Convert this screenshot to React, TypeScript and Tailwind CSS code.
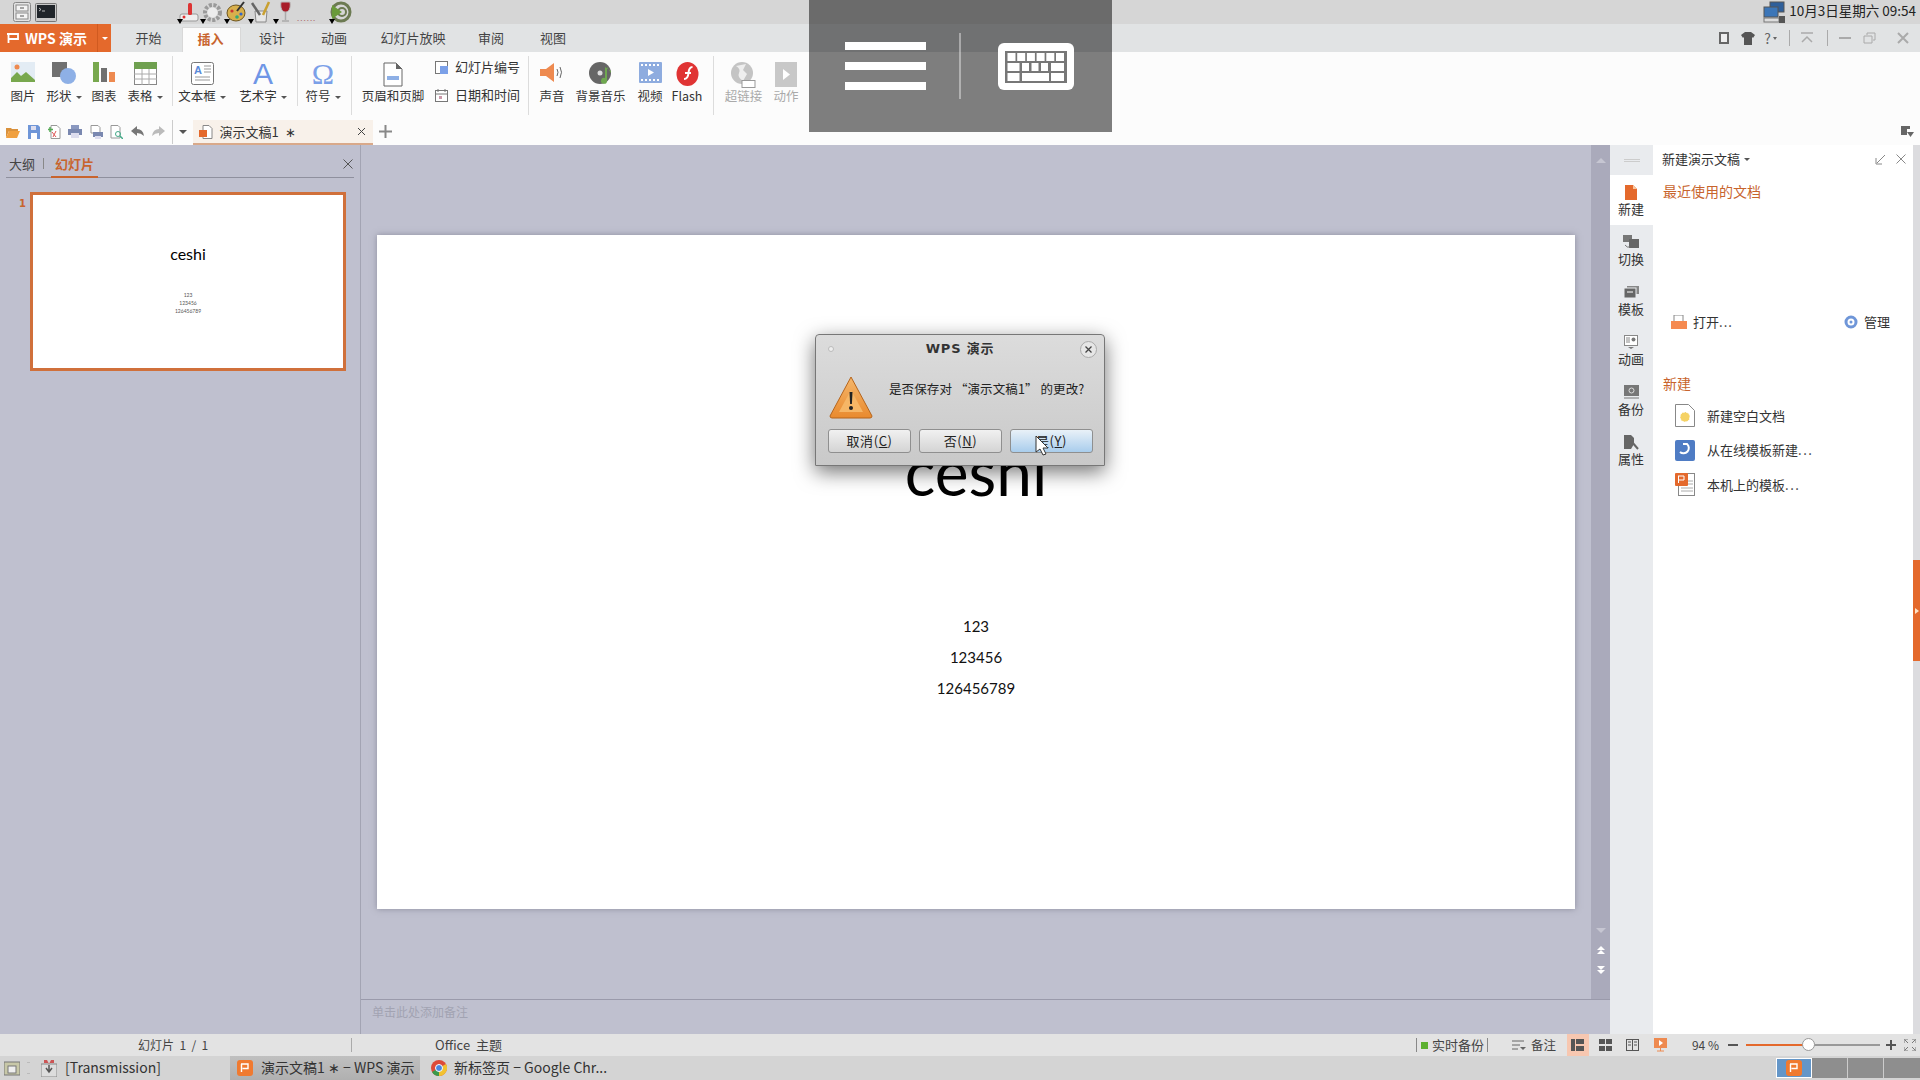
import type { ReactNode } from 'react';

const Drop = () => <span className="inline-block w-0 h-0 ml-[4px] align-middle border-x-[3px] border-x-transparent border-t-[3px] border-t-[#555]" />;

const RibbonBtn = ({ w, label, arrow, muted, children }: { w: number; label: string; arrow?: boolean; muted?: boolean; children: ReactNode }) => (
  <div className="flex flex-col items-center shrink-0" style={{ width: w }}>
    <div className="h-[26px] flex items-start justify-center">{children}</div>
    <div className={`h-[16px] leading-[16px] text-[12.5px] whitespace-nowrap ${muted ? 'text-[#aaa]' : 'text-[#333]'}`}>
      {label}{arrow && <Drop />}
    </div>
  </div>
);

const Sep = ({ h = 50 }: { h?: number }) => <div className="w-px bg-[#dcdcdc] mt-[4px] shrink-0" style={{ height: h }} />;

const Launcher = ({ w, children }: { w: number; children: ReactNode }) => (
  <div className="relative h-[24px] flex items-center justify-center shrink-0" style={{ width: w }}>
    {children}
    <span className="absolute left-[0px] bottom-[0px] w-0 h-0 border-x-[3px] border-x-transparent border-t-[5px] border-t-black" />
  </div>
);

const SideTab = ({ label, active, children }: { label: string; active?: boolean; children: ReactNode }) => (
  <div className={`h-[50px] flex flex-col items-center pt-[9px] pr-[1px] ${active ? 'bg-white' : ''}`}>
    <div className="h-[16px] flex items-center">{children}</div>
    <div className="text-[13px] leading-[18px] text-[#333]">{label}</div>
  </div>
);

const DialogBtn = ({ label, k, primary }: { label: string; k: string; primary?: boolean }) => (
  <div className={`w-[83px] h-[24px] rounded-[3px] border border-[#8f8f8f] flex items-center justify-center text-[13px] text-[#222] ${primary ? 'bg-gradient-to-b from-[#e9f1f8] to-[#a9cdec]' : 'bg-gradient-to-b from-[#f1f1f1] to-[#d4d4d4]'}`}>
    <span className="whitespace-nowrap tracking-[0.6px]">{label}(<span className="underline">{k}</span>)</span>
  </div>
);

const QuickIcon = ({ children }: { children: ReactNode }) => <div className="w-[20.7px] flex justify-center shrink-0">{children}</div>;

const ppt = (
  <svg width="16" height="16" viewBox="0 0 16 16"><rect width="16" height="16" rx="3" fill="#f07a30" /><path d="M4 4h7v4.5H5.5M4.5 4v8" fill="none" stroke="#fff" strokeWidth="1.4" /></svg>
);

export default function App() {
  return (
    <div className="relative w-[1920px] h-[1080px] overflow-hidden flex flex-col bg-[#bfc0cf] font-['Noto_Sans_CJK_SC','Liberation_Sans',sans-serif] text-[#333]">
      {/* top panel */}
      <div className="h-[24px] bg-[#d6d6d6] flex items-center shrink-0">
        <svg className="ml-[13px]" width="18" height="20" viewBox="0 0 18 20">
          <rect x=".5" y=".5" width="17" height="19" rx="2" fill="#e4e4e4" stroke="#888" />
          <rect x="3" y="3" width="12" height="6" fill="#f4f4f4" stroke="#888" />
          <rect x="3" y="11" width="12" height="6" fill="#f4f4f4" stroke="#888" />
          <path d="M7 6h4M7 14h4" stroke="#555" />
        </svg>
        <svg className="ml-[4px]" width="22" height="19" viewBox="0 0 22 19">
          <rect x=".5" y=".5" width="21" height="18" rx="1" fill="#c9c9c9" stroke="#777" />
          <rect x="2" y="2" width="18" height="13" fill="#20252a" />
          <path d="M4 5l2 1.500-2 1.500M7 8h3" fill="none" stroke="#ddd" strokeWidth=".8" />
        </svg>
        <div className="ml-[120px] flex">
          <Launcher w={23}>
            <svg width="20" height="22" viewBox="0 0 20 22"><rect x="1" y="13" width="18" height="7" rx="2" fill="#eee" stroke="#999" /><rect x="9" y="2" width="4" height="12" rx="1.5" fill="#d33" /><circle cx="5" cy="16" r="1.5" fill="#d33" /></svg>
          </Launcher>
          <Launcher w={24}>
            <svg width="21" height="21" viewBox="0 0 21 21"><circle cx="10.5" cy="10.5" r="7.5" fill="none" stroke="#9a9a9a" strokeWidth="4" strokeDasharray="3 1.5" /><circle cx="10.5" cy="10.5" r="5" fill="#ececec" /></svg>
          </Launcher>
          <Launcher w={24}>
            <svg width="21" height="22" viewBox="0 0 21 22"><ellipse cx="10" cy="12" rx="9" ry="8" fill="#d8b04c" stroke="#6d5520" /><circle cx="6" cy="10" r="1.6" fill="#c33" /><circle cx="11" cy="16" r="1.8" fill="#3a7" /><circle cx="15" cy="13" r="1.6" fill="#36c" /><path d="M18 1l-7 9" stroke="#333" strokeWidth="2" /></svg>
          </Launcher>
          <Launcher w={25}>
            <svg width="21" height="22" viewBox="0 0 21 22"><path d="M5 10h12l-1 11H6z" fill="#e6e6e6" stroke="#888" /><path d="M2 2l8 12" stroke="#666" strokeWidth="2.5" /><path d="M19 1l-6 13" stroke="#c9a030" strokeWidth="2.5" /></svg>
          </Launcher>
          <Launcher w={24}>
            <svg width="13" height="22" viewBox="0 0 13 22"><path d="M2 1h9c1 6-1 10-4.500 10S1 7 2 1z" fill="#a81c28" stroke="#bbb" /><path d="M6.500 11v8M3 20h7" stroke="#aaa" strokeWidth="1.500" /></svg>
          </Launcher>
          <div className="w-[32px] h-[24px] flex items-end pb-[2px] text-[#a66] text-[8px] leading-none tracking-[1px]">......</div>
          <Launcher w={24}>
            <svg width="22" height="22" viewBox="0 0 22 22"><circle cx="11" cy="11" r="9" fill="none" stroke="#6c7a52" strokeWidth="3" /><circle cx="12" cy="11" r="4" fill="none" stroke="#6c7a52" strokeWidth="2" /><path d="M2 4l10 7-10 7z" fill="#6a9a3a" /></svg>
          </Launcher>
        </div>
        <div className="ml-auto flex items-center pr-[4px]">
          <svg width="22" height="22" viewBox="0 0 22 22"><rect x="7" y="1" width="14" height="10" fill="#2f5f9a" stroke="#555" /><rect x="1" y="6" width="14" height="10" fill="#3c76b8" stroke="#555" /><rect x="1" y="17" width="15" height="4" fill="#ddd" stroke="#777" /><rect x="16" y="15" width="6" height="7" fill="#555" /></svg>
          <span className="ml-[4px] pb-[2px] text-[13.5px] leading-none whitespace-nowrap text-[#222]">10月3日星期六 09:54</span>
        </div>
      </div>

      {/* menu tabs */}
      <div className="h-[28px] bg-[#e1e3e4] flex shrink-0">
        <div className="w-[111px] bg-[#e4692c] flex items-center text-white shrink-0">
          <svg className="ml-[6px]" width="14" height="14" viewBox="0 0 14 14"><path d="M1 3h11v5H3M2.500 3v9" fill="none" stroke="#fff" strokeWidth="1.800" /></svg>
          <span className="ml-[5px] text-[14px] font-bold whitespace-nowrap">WPS 演示</span>
          <span className="ml-auto w-[14px] h-full border-l border-[#d05a20] flex items-center justify-center">
            <span className="w-0 h-0 border-x-[3px] border-x-transparent border-t-[3px] border-t-white" />
          </span>
        </div>
        {[['开始', 71], ['插入', 59], ['设计', 62], ['动画', 62], ['幻灯片放映', 96], ['审阅', 60], ['视图', 64]].map(([t, w]) => (
          <div
            key={t}
            className={`flex items-center justify-center text-[13px] ${t === '插入' ? 'bg-[#fcfcfc] text-[#c8642d] font-bold border-x border-t border-[#d8d8d8] mt-[3px] pb-[3px] pr-[2px]' : 'text-[#444]'} ${t === '开始' ? 'pl-[4px]' : ''}`}
            style={{ width: Number(w) }}
          >
            {t}
          </div>
        ))}
        <div className="ml-auto flex items-center pr-[11px] text-[#666]">
          <svg width="12" height="14" viewBox="0 0 12 14"><rect x="1" y="1" width="10" height="12" fill="#666" /><rect x="3" y="3" width="6" height="8" fill="#eee" /></svg>
          <svg className="ml-[11px]" width="14" height="13" viewBox="0 0 14 13"><path d="M4 0h6l4 3-2 3-1-1v8H3V5L2 6 0 3z" fill="#555" /></svg>
          <span className="ml-[9px] text-[14px] leading-none text-[#666]">?</span>
          <span className="ml-[2px] w-0 h-0 border-x-[2px] border-x-transparent border-t-[3px] border-t-[#666]" />
          <div className="ml-[12px] w-px h-[16px] bg-[#aaa]" />
          <svg className="ml-[10px]" width="14" height="12" viewBox="0 0 14 12"><path d="M1 1h12M2 10l5-5 5 5" fill="none" stroke="#aaa" strokeWidth="1.500" /></svg>
          <div className="ml-[13px] w-px h-[16px] bg-[#aaa]" />
          <div className="ml-[11px] w-[12px] h-[2px] bg-[#aaa]" />
          <svg className="ml-[12px]" width="13" height="12" viewBox="0 0 13 12"><path d="M4 3V1h8v7h-2M1 4h8v7H1z" fill="none" stroke="#aaa" /></svg>
          <svg className="ml-[21px]" width="12" height="12" viewBox="0 0 12 12"><path d="M1 1l10 10M11 1L1 11" stroke="#aaa" strokeWidth="2" /></svg>
        </div>
      </div>

      {/* ribbon */}
      <div className="h-[66px] bg-[#fcfcfc] flex shrink-0">
        <div className="w-[172px] flex pt-[10px] shrink-0">
          <RibbonBtn w={46} label="图片">
            <svg width="24" height="20" viewBox="0 0 24 20"><rect width="24" height="20" fill="#e3ecf4" /><circle cx="6" cy="5" r="2.500" fill="#ee8a50" /><path d="M0 20V16l6-6 4 4 5-4 9 8v2z" fill="#78a84e" /></svg>
          </RibbonBtn>
          <RibbonBtn w={36} label="形状" arrow>
            <svg width="24" height="22" viewBox="0 0 24 22"><rect width="15" height="15" fill="#707070" /><circle cx="16" cy="14" r="8" fill="#8eb0e6" /></svg>
          </RibbonBtn>
          <RibbonBtn w={44} label="图表">
            <svg width="22" height="20" viewBox="0 0 22 20"><rect x="0" width="6" height="20" fill="#78a84e" /><rect x="8" y="6" width="6" height="14" fill="#707070" /><rect x="16" y="10" width="6" height="10" fill="#ee8a50" /></svg>
          </RibbonBtn>
          <RibbonBtn w={38} label="表格" arrow>
            <svg width="23" height="23" viewBox="0 0 23 23"><rect x=".5" y=".5" width="22" height="22" fill="#fff" stroke="#888" /><rect width="23" height="7" fill="#6fa050" /><path d="M0 12h23M0 17h23M8 7v16M15 7v16" stroke="#aaa" /></svg>
          </RibbonBtn>
        </div>
        <Sep />
        <div className="w-[124px] flex pt-[10px] pl-[1px] gap-[5px] shrink-0">
          <RibbonBtn w={56} label="文本框" arrow>
            <svg width="23" height="23" viewBox="0 0 23 23"><rect x=".5" y=".5" width="22" height="22" rx="2" fill="#fff" stroke="#777" /><text x="3" y="12" fontSize="11" fontWeight="700" fontFamily="Liberation Sans" fill="#5a8ad8">A</text><path d="M13 4h7M13 7h7M13 10h7M4 15h15M4 18h15" stroke="#999" /></svg>
          </RibbonBtn>
          <RibbonBtn w={56} label="艺术字" arrow>
            <span className="text-[30px] leading-[24px] text-[#6f96e6] font-['Liberation_Sans',sans-serif]">A</span>
          </RibbonBtn>
        </div>
        <Sep />
        <div className="w-[53px] flex pt-[10px] shrink-0">
          <RibbonBtn w={50} label="符号" arrow>
            <span className="text-[30px] leading-[24px] text-[#7ba0e8] font-['Liberation_Serif',serif]">Ω</span>
          </RibbonBtn>
        </div>
        <Sep h={59} />
        <div className="w-[176px] flex pt-[10px] shrink-0">
          <RibbonBtn w={82} label="页眉和页脚">
            <svg width="20" height="25" viewBox="0 0 20 25"><path d="M1 1h12l6 6v17H1z" fill="#fff" stroke="#666" /><path d="M13 1l6 6h-6z" fill="#666" /><rect x="4" y="14" width="12" height="4" fill="#8eb0e6" /></svg>
          </RibbonBtn>
          <div className="flex flex-col gap-[12px] text-[13px] leading-[16px] -mt-[3px]">
            <div className="flex items-center whitespace-nowrap">
              <svg width="15" height="15" viewBox="0 0 15 15"><rect x="1.500" y="1.500" width="12" height="12" fill="#fff" stroke="#777" /><rect x="6" y="6" width="8" height="8" fill="#7ba0e8" /></svg>
              <span className="ml-[6px]">幻灯片编号</span>
            </div>
            <div className="flex items-center whitespace-nowrap">
              <svg width="15" height="15" viewBox="0 0 15 15"><rect x="1.500" y="2.500" width="12" height="11" fill="#fff" stroke="#777" /><path d="M4 1v3M11 1v3M2 6h11" stroke="#777" /><rect x="5" y="8" width="3" height="3" fill="#c9a" /></svg>
              <span className="ml-[6px]">日期和时间</span>
            </div>
          </div>
        </div>
        <Sep h={59} />
        <div className="w-[184px] flex pt-[10px] shrink-0">
          <RibbonBtn w={46} label="声音">
            <svg width="26" height="21" viewBox="0 0 26 21"><path d="M1 7h6l8-6v19l-8-6H1z" fill="#ee8a50" /><path d="M18 7q2 3 0 7M21 5q3 5 0 11" fill="none" stroke="#666" /></svg>
          </RibbonBtn>
          <RibbonBtn w={51} label="背景音乐">
            <svg width="24" height="25" viewBox="0 0 24 25"><circle cx="11" cy="11" r="11" fill="#666" /><circle cx="11" cy="11" r="2.500" fill="#ddd" /><path d="M18 5v14a3 3 0 1 1-2-3V5l6 4v2z" fill="#6fa850" /></svg>
          </RibbonBtn>
          <RibbonBtn w={48} label="视频">
            <svg width="23" height="21" viewBox="0 0 23 21"><rect width="23" height="21" rx="1" fill="#8eacdf" /><path d="M2 3h19M2 18h19" stroke="#fff" strokeWidth="2" strokeDasharray="2 2" /><path d="M9 7l6 3.500-6 3.500z" fill="#fff" /></svg>
          </RibbonBtn>
          <RibbonBtn w={26} label="Flash">
            <svg width="23" height="24" viewBox="0 0 23 24"><ellipse cx="11.500" cy="12" rx="11" ry="12" fill="#e03434" /><path d="M8 17q4 0 4.500-6t4-6M9 11h6" fill="none" stroke="#fff" strokeWidth="2" /></svg>
          </RibbonBtn>
        </div>
        <Sep h={59} />
        <div className="flex pt-[10px] shrink-0">
          <RibbonBtn w={59} muted label="超链接">
            <svg width="25" height="26" viewBox="0 0 25 26"><circle cx="11" cy="11" r="11" fill="#c4c4c4" /><path d="M5 4q5 3 3 7t4 8l4-7-4-4 3-6" fill="#eee" /><rect x="11" y="18.500" width="13" height="7" fill="#fff" stroke="#999" /></svg>
          </RibbonBtn>
          <RibbonBtn w={26} muted label="动作">
            <svg width="22" height="25" viewBox="0 0 22 25"><rect width="22" height="25" fill="#c8c8c8" /><path d="M8 7l7 5.500-7 5.500z" fill="#fff" /></svg>
          </RibbonBtn>
        </div>
      </div>

      {/* quick access + doc tab */}
      <div className="h-[27px] bg-[#fcfcfc] flex items-center shrink-0 relative">
        <div className="flex items-center pl-[3px]">
          <QuickIcon><svg width="14" height="12" viewBox="0 0 14 12"><path d="M0 2h5l1 1h6v2H3L0 12z" fill="#d9913c" /><path d="M3 5h11l-3 7H0z" fill="#f0a040" /></svg></QuickIcon>
          <QuickIcon><svg width="12" height="14" viewBox="0 0 12 14"><path d="M0 0h10l2 2v12H0z" fill="#6f96d8" /><rect x="3" y="8" width="6" height="6" fill="#fff" /><rect x="3" y="1" width="5" height="4" fill="#dde" /></svg></QuickIcon>
          <QuickIcon><svg width="13" height="14" viewBox="0 0 13 14"><path d="M3 .5h6l3 3v10H3z" fill="#fff" stroke="#999" /><path d="M4 7l4 5M8 6l-3 6" stroke="#d55" /><path d="M2 2v5M0 4.500h5" stroke="#5a5" strokeWidth="1.500" /></svg></QuickIcon>
          <QuickIcon><svg width="14" height="13" viewBox="0 0 14 13"><rect x="3" y="0" width="8" height="4" fill="#8a98c0" /><rect x="0" y="4" width="14" height="6" fill="#7a88b0" /><rect x="3" y="8" width="8" height="5" fill="#dde" /></svg></QuickIcon>
          <QuickIcon><svg width="13" height="14" viewBox="0 0 13 14"><path d="M1 .5h7l2 2V8H1z" fill="#fff" stroke="#999" /><rect x="3" y="7" width="10" height="5" fill="#7a88b0" /><rect x="5" y="11" width="6" height="3" fill="#dde" /></svg></QuickIcon>
          <QuickIcon><svg width="13" height="14" viewBox="0 0 13 14"><path d="M1 .5h7l2 2V13H1z" fill="#fff" stroke="#999" /><circle cx="8" cy="9" r="2.500" fill="none" stroke="#4a8" /><path d="M10 11l3 3" stroke="#4a8" strokeWidth="1.500" /></svg></QuickIcon>
          <QuickIcon><svg width="13" height="11" viewBox="0 0 13 11"><path d="M6 0L0 5l6 5V7q4 0 7 3-1-7-7-7z" fill="#777" /></svg></QuickIcon>
          <QuickIcon><svg width="13" height="11" viewBox="0 0 13 11"><path d="M7 0l6 5-6 5V7q-4 0-7 3 1-7 7-7z" fill="#bbb" /></svg></QuickIcon>
        </div>
        <div className="ml-[3px] w-px h-[24px] bg-[#ccc]" />
        <span className="ml-[6px] w-0 h-0 border-x-[4px] border-x-transparent border-t-[4px] border-t-[#555]" />
        <div className="ml-[6px] self-end w-[180px] h-[25px] bg-[#f8f1ea] border-b-2 border-[#d9a98a] flex items-center pl-[6px] pr-[4px] text-[13px] text-[#333]">
          <svg width="14" height="14" viewBox="0 0 14 14"><path d="M4 .5h6l3 3v10H4z" fill="#fff" stroke="#888" /><rect x="0" y="5" width="8" height="7" fill="#e4692c" /></svg>
          <span className="ml-[7px] whitespace-pre">演示文稿1  ∗</span>
          <svg className="ml-auto mr-[3px]" width="9" height="9" viewBox="0 0 9 9"><path d="M1 1l7 7M8 1L1 8" stroke="#444" /></svg>
        </div>
        <svg className="ml-[6px]" width="13" height="13" viewBox="0 0 13 13"><path d="M6.500 0v13M0 6.500h13" stroke="#888" strokeWidth="2" /></svg>
        <svg className="ml-auto mr-[6px]" width="13" height="12" viewBox="0 0 13 12"><path d="M0 0h9v3h-3v6H0z" fill="#666" /><path d="M6 6h7l-3.500 5z" fill="#666" /></svg>
      </div>

      {/* main area */}
      <div className="flex-1 flex min-h-0">
        <div className="w-[361px] shrink-0 border-r border-[#a3a4b3] px-[6px]">
          <div className="h-[33px] border-b border-[#8f909e] flex items-end relative text-[13px]">
            <span className="ml-[3px] pb-[4px] leading-[18px] text-[#444]">大纲</span>
            <span className="ml-[8px] mb-[8px] w-px h-[11px] bg-[#888]" />
            <span className="ml-[7px] px-[4px] pb-[3px] border-b-2 border-[#c8642d] -mb-px leading-[18px] font-bold text-[#c8642d]">幻灯片</span>
            <svg className="ml-auto mb-[8px] mr-[1px]" width="10" height="10" viewBox="0 0 10 10"><path d="M.5.5l9 9M9.500.5l-9 9" stroke="#555" /></svg>
          </div>
          <div className="flex pt-[14px]">
            <span className="w-[24px] pl-[13px] pt-[3px] text-[10px] leading-[18px] font-bold text-[#c8642d] font-['DejaVu_Sans',sans-serif]">1</span>
            <div className="w-[316px] h-[179px] bg-white border-[3px] border-[#d0703b] flex flex-col items-center pt-[48px]">
              <span className="text-[16px] leading-[22px] text-black font-['Lato',sans-serif]">ceshi</span>
              <div className="mt-[26px] flex flex-col items-center text-[5px] leading-[8px] text-[#555] font-['Lato',sans-serif]">
                <span>123</span><span>123456</span><span>126456789</span>
              </div>
            </div>
          </div>
        </div>

        <div className="flex-1 flex flex-col min-w-0">
          <div className="flex-1 flex min-h-0">
            <div className="flex-1 px-[16px] pt-[90px]">
              <div className="w-[1198px] h-[674px] bg-white shadow-[0_0_6px_rgba(90,90,110,0.5)] flex flex-col items-center pt-[197px] text-black font-['Lato',sans-serif]">
                <div className="text-[64px] leading-[80px]">ceshi</div>
                <div className="mt-[99px] flex flex-col items-center text-[15px] leading-[31px] text-[#111]">
                  <span>123</span><span>123456</span><span>126456789</span>
                </div>
              </div>
            </div>
            <div className="w-[19px] bg-[#aaaabb] flex flex-col items-center justify-between pt-[13px] pb-[25px] shrink-0">
              <span className="w-0 h-0 border-x-[5px] border-x-transparent border-b-[5px] border-b-[#c6c6d2]" />
              <div className="flex flex-col items-center">
                <span className="w-0 h-0 mb-[13px] border-x-[5px] border-x-transparent border-t-[5px] border-t-[#c6c6d2]" />
                <svg width="8" height="9" viewBox="0 0 8 9"><path d="M4 0l4 4H0zM4 4l4 4H0z" fill="#fff" /></svg>
                <svg className="mt-[10px]" width="8" height="9" viewBox="0 0 8 9"><path d="M4 9L0 5h8zM4 5L0 1h8z" fill="#fff" /></svg>
              </div>
            </div>
          </div>
          <div className="h-[35px] border-t border-[#9a9aab] pl-[11px] text-[12px] leading-[24px] text-[#a2a3b2] shrink-0">单击此处添加备注</div>
        </div>

        <div className="w-[43px] bg-[#e9ebee] shrink-0">
          <div className="h-[30px] flex items-center justify-center">
            <div className="w-[16px] h-[3px] border-y border-[#ccc]" />
          </div>
          <SideTab label="新建" active>
            <svg width="12" height="15" viewBox="0 0 12 15"><path d="M0 0h8l4 4v11H0z" fill="#e4692c" /><path d="M8 0l4 4H8z" fill="#f7c7a0" /></svg>
          </SideTab>
          <SideTab label="切换">
            <svg width="16" height="14" viewBox="0 0 16 14"><rect y="0" width="9" height="7" fill="#777" /><rect x="6" y="4" width="10" height="9" fill="#666" /><path d="M2 10q2 3 5 2" fill="none" stroke="#777" /></svg>
          </SideTab>
          <SideTab label="模板">
            <svg width="15" height="12" viewBox="0 0 15 12"><rect x="3" y="0" width="12" height="8" fill="#888" /><rect y="2" width="12" height="10" fill="#666" stroke="#e9ebee" /><path d="M3 6h6" stroke="#fff" /></svg>
          </SideTab>
          <SideTab label="动画">
            <svg width="14" height="14" viewBox="0 0 14 14"><rect x=".5" y=".5" width="13" height="10" fill="#fff" stroke="#888" /><path d="M2 3h4M2 5h4M2 7h4" stroke="#888" /><circle cx="9.500" cy="4.500" r="2" fill="#777" /><path d="M4 12h6l-3 2z" fill="#777" /></svg>
          </SideTab>
          <SideTab label="备份">
            <svg width="15" height="14" viewBox="0 0 15 14"><rect width="15" height="11" fill="#777" /><circle cx="7.500" cy="5.500" r="2.500" fill="none" stroke="#ddd" /><path d="M0 13h15" stroke="#777" /></svg>
          </SideTab>
          <SideTab label="属性">
            <svg width="15" height="15" viewBox="0 0 15 15"><path d="M0 0h7l3 3v6l-3 5H0z" fill="#666" /><path d="M8 7l6 7" stroke="#666" strokeWidth="2" /></svg>
          </SideTab>
        </div>

        <div className="w-[260px] bg-white shrink-0 pl-[9px] flex flex-col">
          <div className="h-[28px] flex items-center text-[13px] text-[#333]">
            <span>新建演示文稿</span><Drop />
            <svg className="ml-auto" width="11" height="11" viewBox="0 0 11 11"><path d="M10 1L2 9M1 4v6h6" fill="none" stroke="#888" /></svg>
            <svg className="ml-[10px] mr-[7px]" width="10" height="10" viewBox="0 0 10 10"><path d="M.5.5l9 9M9.500.5l-9 9" stroke="#888" /></svg>
          </div>
          <div className="mt-[8px] pl-[1px] text-[14px] leading-[20px] text-[#c8642d]">最近使用的文档</div>
          <div className="mt-[111px] flex items-center text-[13px] leading-[20px] pl-[9px] pr-[23px]">
            <svg width="16" height="14" viewBox="0 0 16 14"><rect x="3" y="0" width="9" height="8" fill="#fff" stroke="#888" /><path d="M0 6h16v8H0z" fill="#f58a50" /></svg>
            <span className="ml-[6px]">打开<span className="tracking-[1px]">...</span></span>
            <svg className="ml-auto" width="14" height="14" viewBox="0 0 14 14"><circle cx="7" cy="7" r="5" fill="none" stroke="#6f96d8" strokeWidth="3" /><circle cx="7" cy="7" r="1.500" fill="#6f96d8" /></svg>
            <span className="ml-[6px]">管理</span>
          </div>
          <div className="mt-[41px] pl-[1px] text-[14px] leading-[20px] text-[#c8642d]">新建</div>
          <div className="mt-[11px] pl-[13px] flex flex-col gap-[12px] text-[13px] leading-[22px]">
            <div className="flex items-center">
              <svg width="20" height="23" viewBox="0 0 20 23"><path d="M.5.5h13l6 6v16H.5z" fill="#fff" stroke="#888" /><circle cx="10" cy="13" r="5" fill="#f5d264" stroke="#fff" strokeDasharray="2 1" /></svg>
              <span className="ml-[12px]">新建空白文档</span>
            </div>
            <div className="flex items-center">
              <svg width="20" height="21" viewBox="0 0 20 21"><rect width="20" height="21" rx="2" fill="#4f7cc4" /><path d="M8 4h4a5 5 0 1 1-7 8" fill="none" stroke="#fff" strokeWidth="2" /></svg>
              <span className="ml-[12px]">从在线模板新建<span className="tracking-[1.500px]">...</span></span>
            </div>
            <div className="flex items-center">
              <svg width="20" height="23" viewBox="0 0 20 23"><rect x="3.500" y=".5" width="16" height="22" fill="#fff" stroke="#888" /><path d="M12 8h6M12 11h6M6 15h12M6 18h12" stroke="#aaa" /><rect width="13" height="13" rx="1" fill="#e4692c" /><path d="M3 3h6v4H4M3.500 3v7" fill="none" stroke="#fff" /></svg>
              <span className="ml-[12px]">本机上的模板<span className="tracking-[1.500px]">...</span></span>
            </div>
          </div>
        </div>

        <div className="w-[7px] bg-[#dcdcdf] shrink-0 flex flex-col pt-[415px]">
          <div className="h-[101px] bg-[#e4692c] flex items-center justify-center">
            <span className="w-0 h-0 border-y-[3px] border-y-transparent border-l-[4px] border-l-[#fde3c8]" />
          </div>
        </div>
      </div>

      {/* status bar */}
      <div className="h-[22px] bg-[#e3e3e3] flex items-center text-[12px] text-[#444] shrink-0">
        <div className="w-[352px] pl-[138px] border-r border-[#aaa] h-[14px] leading-[14px] whitespace-pre">幻灯片  1  /  1</div>
        <span className="ml-[83px] whitespace-pre text-[13px]">Office  主题</span>
        <div className="ml-auto flex items-center h-full">
          <div className="w-px h-[14px] bg-[#888]" />
          <span className="ml-[4px] w-[7px] h-[7px] bg-[#5cb030]" />
          <span className="ml-[4px] text-[13px] whitespace-nowrap">实时备份</span>
          <div className="ml-[3px] w-px h-[14px] bg-[#888]" />
          <svg className="ml-[24px]" width="14" height="11" viewBox="0 0 14 11"><path d="M0 1h12M0 5h8M0 9h6" stroke="#666" /><path d="M8 7h6l-3 3z" fill="#666" /></svg>
          <span className="ml-[5px] text-[12.500px] whitespace-nowrap">备注</span>
          <div className="ml-[11px] w-[22px] h-full bg-[#f7c7b0] flex items-center justify-center">
            <svg width="13" height="12" viewBox="0 0 13 12"><rect width="4" height="12" fill="#555" /><rect x="5" width="8" height="5" fill="#555" /><rect x="5" y="7" width="8" height="5" fill="#555" /></svg>
          </div>
          <svg className="ml-[10px]" width="13" height="12" viewBox="0 0 13 12"><rect width="6" height="5" fill="#555" /><rect x="7" width="6" height="5" fill="#555" /><rect y="7" width="6" height="5" fill="#555" /><rect x="7" y="7" width="6" height="5" fill="#555" /></svg>
          <svg className="ml-[14px]" width="13" height="12" viewBox="0 0 13 12"><rect x=".5" y=".5" width="12" height="11" fill="none" stroke="#555" /><path d="M6.500 0v12M2 3h3M2 6h3M8 3h3M8 6h3" stroke="#555" /></svg>
          <svg className="ml-[15px]" width="13" height="14" viewBox="0 0 13 14"><rect width="13" height="10" fill="#ee8a50" /><path d="M6.500 10v3M3 13h7" fill="none" stroke="#ee8a50" /><path d="M5 2l4 3-4 3z" fill="#fff" /></svg>
          <span className="ml-[25px] whitespace-nowrap text-[12px]">94 %</span>
          <div className="ml-[9px] w-[10px] h-[2px] bg-[#555]" />
          <div className="ml-[8px] relative w-[134px] h-[2px] bg-[#999]">
            <div className="h-full bg-[#e4692c]" style={{ width: 59 }} />
            <span className="absolute left-[56px] top-[-6px] w-[13px] h-[13px] rounded-full bg-white border border-[#999]" />
          </div>
          <svg className="ml-[6px]" width="10" height="10" viewBox="0 0 10 10"><path d="M5 0v10M0 5h10" stroke="#555" strokeWidth="2" /></svg>
          <svg className="ml-[8px] mr-[4px]" width="12" height="12" viewBox="0 0 12 12"><path d="M0 4V0h4M8 0h4v4M12 8v4H8M4 12H0V8M1 1l3 3M11 1L8 4M11 11L8 8M1 11l3-3" fill="none" stroke="#777" /></svg>
        </div>
      </div>

      {/* taskbar */}
      <div className="h-[24px] bg-[#d4d4d4] flex items-center text-[14px] leading-[20px] text-[#333] shrink-0">
        <svg className="ml-[4px]" width="16" height="16" viewBox="0 0 16 16"><rect y="2" width="16" height="13" fill="#c8c8a8" stroke="#777" /><rect x="4" y="6" width="8" height="7" fill="#eee" stroke="#777" /></svg>
        <div className="ml-[7px] w-[3px] h-[12px] border-y border-[#bbb]" />
        <svg className="ml-[11px]" width="16" height="17" viewBox="0 0 16 17"><rect y="4" width="16" height="13" fill="#ddd" stroke="#888" /><path d="M8 5v6M5 8l3 4 3-4" fill="none" stroke="#555" strokeWidth="1.500" /><path d="M3 0h3l2 4 2-4h3v3H3z" fill="#c55" /></svg>
        <span className="ml-[8px] w-[165px] whitespace-nowrap pb-[2px]">[Transmission]</span>
        <div className="w-[190px] h-full bg-gradient-to-b from-[#c0c0c0] to-[#b0b0b0] flex items-center pl-[7px] shrink-0">
          {ppt}
          <span className="ml-[8px] whitespace-pre pb-[2px]">演示文稿1 ∗ − WPS 演示</span>
        </div>
        <svg className="ml-[11px]" width="16" height="16" viewBox="0 0 16 16"><circle cx="8" cy="8" r="8" fill="#dd4b39" /><path d="M8 8L1 12a8 8 0 0 0 7 4z" fill="#3a9a4a" /><path d="M8 8l7-4a8 8 0 0 1-7 12z" fill="#f2c230" /><circle cx="8" cy="8" r="3.500" fill="#4a86e0" stroke="#fff" /></svg>
        <span className="ml-[7px] whitespace-pre pb-[2px]">新标签页 − Google Chr...</span>
        <div className="ml-auto flex h-[20px]">
          <div className="w-[36px] bg-[#6496c8] border border-white flex items-center justify-center">
            {ppt}
          </div>
          <div className="w-[36px] bg-[#8e8e8e] border-r border-[#ccc]" />
          <div className="w-[36px] bg-[#8e8e8e] border-r border-[#ccc]" />
          <div className="w-[36px] bg-[#8e8e8e]" />
        </div>
      </div>

      {/* on-screen keyboard toggle overlay */}
      <div className="absolute left-[809px] top-0 w-[303px] h-[132px] bg-black/50 flex items-center">
        <div className="ml-[36px] flex flex-col gap-[12px]">
          <div className="w-[81px] h-[8px] bg-white" />
          <div className="w-[81px] h-[8px] bg-white" />
          <div className="w-[81px] h-[8px] bg-white" />
        </div>
        <div className="ml-[33px] w-[2px] h-[66px] bg-white/40" />
        <svg className="ml-[37px]" width="76" height="47" viewBox="0 0 76 47">
          <rect width="76" height="47" rx="6" fill="#fff" />
          <rect x="7" y="8" width="62" height="32" fill="#777" />
          {[0, 1, 2, 3, 4, 5].map(i => <rect key={i} x={9.5 + i * 9.7} y="10" width="8" height="8" fill="#fff" />)}
          <rect x="9.500" y="20" width="12" height="8" fill="#fff" />
          <rect x="24" y="20" width="7" height="8" fill="#fff" />
          <rect x="33.500" y="20" width="7" height="8" fill="#fff" />
          <rect x="43" y="20" width="7" height="8" fill="#fff" />
          <rect x="53" y="20" width="13" height="8" fill="#fff" />
          <rect x="9.500" y="30" width="12" height="8" fill="#fff" />
          <rect x="24" y="30" width="27" height="8" fill="#fff" />
          <rect x="53" y="30" width="13" height="8" fill="#fff" />
        </svg>
      </div>

      {/* save dialog */}
      <div className="absolute left-[815px] top-[334px] w-[290px] h-[132px] rounded-t-[4px] border border-[#777] bg-gradient-to-b from-[#dcdcdc] to-[#c9c9c9] shadow-[0_6px_20px_rgba(0,0,0,0.55)] flex flex-col">
        <div className="h-[28px] flex items-center pl-[12px] pr-[7px]">
          <span className="w-[6px] h-[6px] rounded-full bg-[#eee] border border-[#bbb]" />
          <span className="flex-1 pl-[6px] text-center text-[13px] font-bold text-[#333] font-['DejaVu_Sans','Noto_Sans_CJK_SC',sans-serif] tracking-[0.8px]">WPS 演示</span>
          <span className="w-[17px] h-[17px] rounded-full bg-[#e6e6e6] border border-[#aaa] flex items-center justify-center">
            <svg width="7" height="7" viewBox="0 0 7 7"><path d="M.5.5l6 6M6.500.5l-6 6" stroke="#444" strokeWidth="1.300" /></svg>
          </span>
        </div>
        <div className="flex pl-[13px] h-[66px]">
          <svg className="mt-[13px]" width="44" height="43" viewBox="0 0 44 43">
            <defs><linearGradient id="warn" x1="0" y1="0" x2="0" y2="1"><stop offset="0" stopColor="#f5b76c" /><stop offset="1" stopColor="#e98a2e" /></linearGradient></defs>
            <path d="M22 1L43 40q0 2-2 2H3q-2 0-2-2z" fill="url(#warn)" stroke="#b5651d" />
            <path d="M22 14l12 22H10z" fill="#f6b666" />
            <path d="M20.500 16h3l-.6 12h-1.800z" fill="#222" /><circle cx="22" cy="32" r="2" fill="#222" />
          </svg>
          <span className="ml-[16px] mt-[16px] text-[12.500px] leading-[20px] text-[#222] whitespace-nowrap tracking-[0.1px]">是否保存对 “演示文稿1” 的更改?</span>
        </div>
        <div className="flex gap-[8px] pl-[12px]">
          <DialogBtn label="取消" k="C" />
          <DialogBtn label="否" k="N" />
          <DialogBtn label="是" k="Y" primary />
        </div>
      </div>

      {/* mouse cursor */}
      <svg className="absolute left-[1035px] top-[435px]" width="14" height="21" viewBox="0 0 14 21">
        <path d="M1 1v16l4-3 3 6 3-1-3-6h5z" fill="#fff" stroke="#333" />
      </svg>
    </div>
  );
}
